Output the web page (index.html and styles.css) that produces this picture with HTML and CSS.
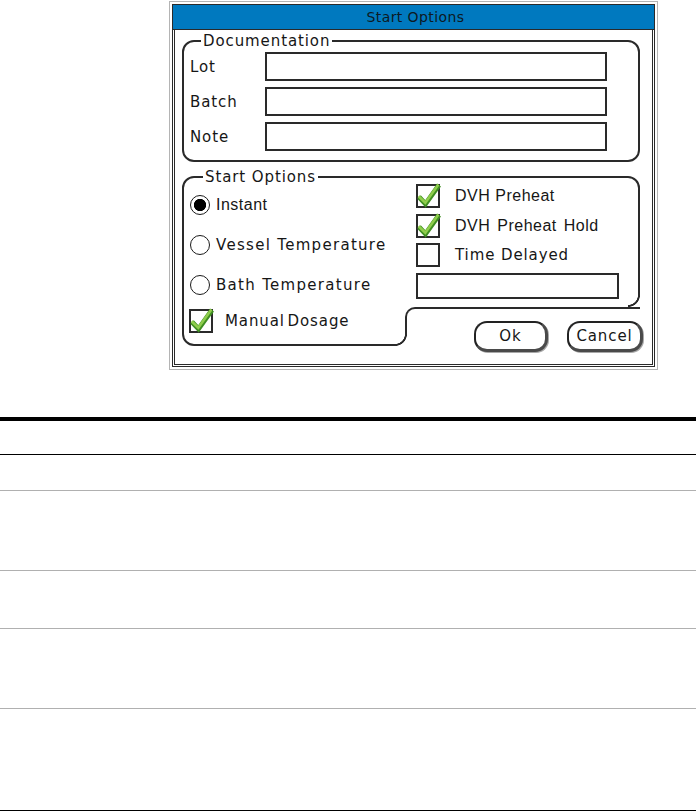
FILE: index.html
```html
<!DOCTYPE html>
<html lang="en">
<head>
    <meta charset="UTF-8">
    <meta name="viewport" content="width=device-width, initial-scale=1.0">
    <title>Start Options</title>
    <link rel="stylesheet" href="styles.css">
</head>
<body>
    <div class="screen">
        <div class="dialog">
            <div class="titlebar">Start Options</div>
            <div class="dialog-body">

                <fieldset class="group doc">
                    <legend>Documentation</legend>
                    <div class="field">
                        <label for="lot">Lot</label>
                        <input type="text" id="lot" name="lot">
                    </div>
                    <div class="field">
                        <label for="batch">Batch</label>
                        <input type="text" id="batch" name="batch">
                    </div>
                    <div class="field">
                        <label for="note">Note</label>
                        <input type="text" id="note" name="note">
                    </div>
                </fieldset>

                <fieldset class="group start">
                    <legend>Start Options</legend>
                    <div class="start-top">
                        <div class="col-left">
                            <div class="radio-row"><span class="radio on"></span><span class="narrow">Instant</span></div>
                            <div class="radio-row"><span class="radio"></span><span class="spaced">Vessel Temperature</span></div>
                            <div class="radio-row"><span class="radio"></span><span class="spaced">Bath Temperature</span></div>
                        </div>
                        <div class="col-right">
                            <div class="check-row">
                                <span class="check"><svg class="tick" viewBox="0 0 24 24"><path class="tick-dark" d="M3 13 L9.5 20 L23 1"/><path class="tick-light" d="M2.6 12.2 L9.3 18.8 L22.4 0.4"/></svg></span>
                                <span class="narrow">DVH Preheat</span>
                            </div>
                            <div class="check-row">
                                <span class="check"><svg class="tick" viewBox="0 0 24 24"><path class="tick-dark" d="M3 13 L9.5 20 L23 1"/><path class="tick-light" d="M2.6 12.2 L9.3 18.8 L22.4 0.4"/></svg></span>
                                <span class="narrow wide-words">DVH Preheat Hold</span>
                            </div>
                            <div class="check-row">
                                <span class="check"></span>
                                <span>Time Delayed</span>
                            </div>
                            <input type="text" class="delay" name="delay">
                        </div>
                    </div>
                    <div class="start-bottom">
                        <div class="check-row manual">
                            <span class="check"><svg class="tick" viewBox="0 0 24 24"><path class="tick-dark" d="M3 13 L9.5 20 L23 1"/><path class="tick-light" d="M2.6 12.2 L9.3 18.8 L22.4 0.4"/></svg></span>
                            <span class="tight-words">Manual Dosage</span>
                        </div>
                        <div class="notch">
                            <button type="button" class="btn">Ok</button>
                            <button type="button" class="btn">Cancel</button>
                        </div>
                    </div>
                </fieldset>

            </div>
        </div>
    </div>

    <div class="doc-table">
        <div class="row head"></div>
        <div class="row r1"></div>
        <div class="row r2"></div>
        <div class="row r3"></div>
        <div class="row r4"></div>
        <div class="row r5"></div>
    </div>
</body>
</html>
```

FILE: styles.css
```css
body {
    margin: 0;
    font-family: "DejaVu Sans", Verdana, sans-serif;
    color: #161616;
    background-color: #fff;
}

/* device screenshot frame */
.screen {
    width: 483px;
    margin: 1px 0 0 169px;
    padding: 2px;
    border: 1px solid #b4b4b4;
}

.dialog {
    border: 1px solid #2a2a2a;
}

.titlebar {
    height: 24px;
    line-height: 24px;
    background-color: #0079bf;
    border-bottom: 1px solid #2a2a2a;
    text-align: center;
    font-size: 14px;
    letter-spacing: 0.4px;
    color: #0d1a24;
    padding-left: 4px;
}

.dialog-body {
    margin: 0 1px 1px;
    padding: 3px 12px 18px 7px;
    border: 1px solid #2a2a2a;
    border-top: none;
    font-size: 15px;
    letter-spacing: 0.9px;
}

/* group boxes */
.group {
    margin: 0;
    border: 2px solid #2a2a2a;
    border-radius: 12px;
    min-width: 0;
}

.group legend {
    padding: 0 2px;
    line-height: 16px;
    margin-left: 11px;
}

.doc {
    padding: 3px 30px 9px 6px;
}

.field {
    display: flex;
    align-items: center;
    height: 29px;
    margin-bottom: 6px;
}

.field:last-child {
    margin-bottom: 0;
}

.field label {
    width: 75px;
}

input[type="text"] {
    box-sizing: border-box;
    border: 2px solid #2a2a2a;
    border-radius: 0;
    background: #fff;
    padding: 0;
    margin: 0;
}

.field input {
    width: 342px;
    height: 29px;
}

.start {
    margin-top: 7px;
    padding: 0 10px 0 6px;
}

.start legend {
    margin-left: 13px;
}

.start-top {
    display: flex;
    height: 122px;
}

.col-left {
    width: 226px;
    flex: none;
}

.radio-row {
    display: flex;
    align-items: center;
    height: 40px;
}

.radio {
    width: 20px;
    height: 20px;
    box-sizing: border-box;
    border: 1.5px solid #1a1a1a;
    border-radius: 50%;
    margin-right: 6px;
    flex: none;
}

.radio.on {
    background: radial-gradient(circle, #000 0 5.8px, #fff 6.5px);
}

.spaced {
    letter-spacing: 1.3px;
}

.col-right {
    display: flex;
    flex-direction: column;
    margin-top: -1px;
}

.check-row {
    display: flex;
    align-items: center;
    height: 24px;
    margin-bottom: 6px;
}

.check-row:nth-child(2) {
    margin-bottom: 5px;
}

.check {
    position: relative;
    width: 24px;
    height: 24px;
    box-sizing: border-box;
    border: 2px solid #2a2a2a;
    margin-right: 15px;
    flex: none;
}

.tick {
    position: absolute;
    left: -2px;
    top: -2px;
    width: 24px;
    height: 24px;
    overflow: visible;
    fill: none;
    stroke-linejoin: miter;
}

.tick-dark {
    stroke: #3f8e22;
    stroke-width: 4.8;
}

.tick-light {
    stroke: #8fcd4c;
    stroke-width: 2.6;
}

.narrow {
    font-family: "Liberation Sans", Arial, sans-serif;
    font-size: 16px;
    letter-spacing: 0.5px;
}

.wide-words {
    word-spacing: 2px;
}

.tight-words {
    word-spacing: -3px;
}

.delay {
    width: 203px;
    height: 26px;
    margin-top: 1px;
}

.start-bottom {
    display: flex;
}

.manual {
    flex: none;
    width: 216px;
    margin: 2px 0 0 -1px;
}

.manual .check {
    margin-right: 12px;
}

/* the cut-out corner holding the buttons */
.notch {
    position: relative;
    flex: 1;
    min-width: 0;
    height: 37px;
    margin: 0 -12px -2px 0;
    padding-left: 67px;
    border-top: 2px solid #2a2a2a;
    border-left: 2px solid #2a2a2a;
    border-top-left-radius: 10px;
    background-color: #fff;
    display: flex;
    align-items: flex-start;
}

.notch::before,
.notch::after {
    content: "";
    position: absolute;
    width: 12px;
    height: 12px;
    background: radial-gradient(circle at 0 0, #fff 9.6px, #2a2a2a 10.2px, #2a2a2a 11.6px, #fff 12.2px);
}

.notch::before {
    right: 0;
    top: -14px;
}

.notch::after {
    left: -12px;
    bottom: 0;
}

.btn {
    margin-top: 12px;
    width: 74px;
    height: 31px;
    box-sizing: border-box;
    flex: none;
    background: #fff;
    border: 2px solid #222;
    border-right-width: 3px;
    border-bottom-width: 3px;
    border-right-color: #4a4a4a;
    border-bottom-color: #4a4a4a;
    border-radius: 13px;
    box-shadow: 1px 1px 0 #a8a8a8;
    font-family: "DejaVu Sans", Verdana, sans-serif;
    font-size: 15px;
    letter-spacing: 0.9px;
    color: #161616;
    padding: 0;
}

.btn + .btn {
    margin-left: 19px;
    width: 76px;
}

/* empty table below the figure */
.doc-table {
    margin-top: 47px;
    border-top: 4px solid #000;
}

.row {
    border-bottom: 1px solid #b0b0b0;
}

.row.head {
    height: 33px;
    border-bottom-color: #000;
}

.r1 { height: 35px; }
.r2 { height: 79px; }
.r3 { height: 57px; }
.r4 { height: 79px; }

.r5 {
    height: 101px;
    border-bottom-color: #000;
}
```
